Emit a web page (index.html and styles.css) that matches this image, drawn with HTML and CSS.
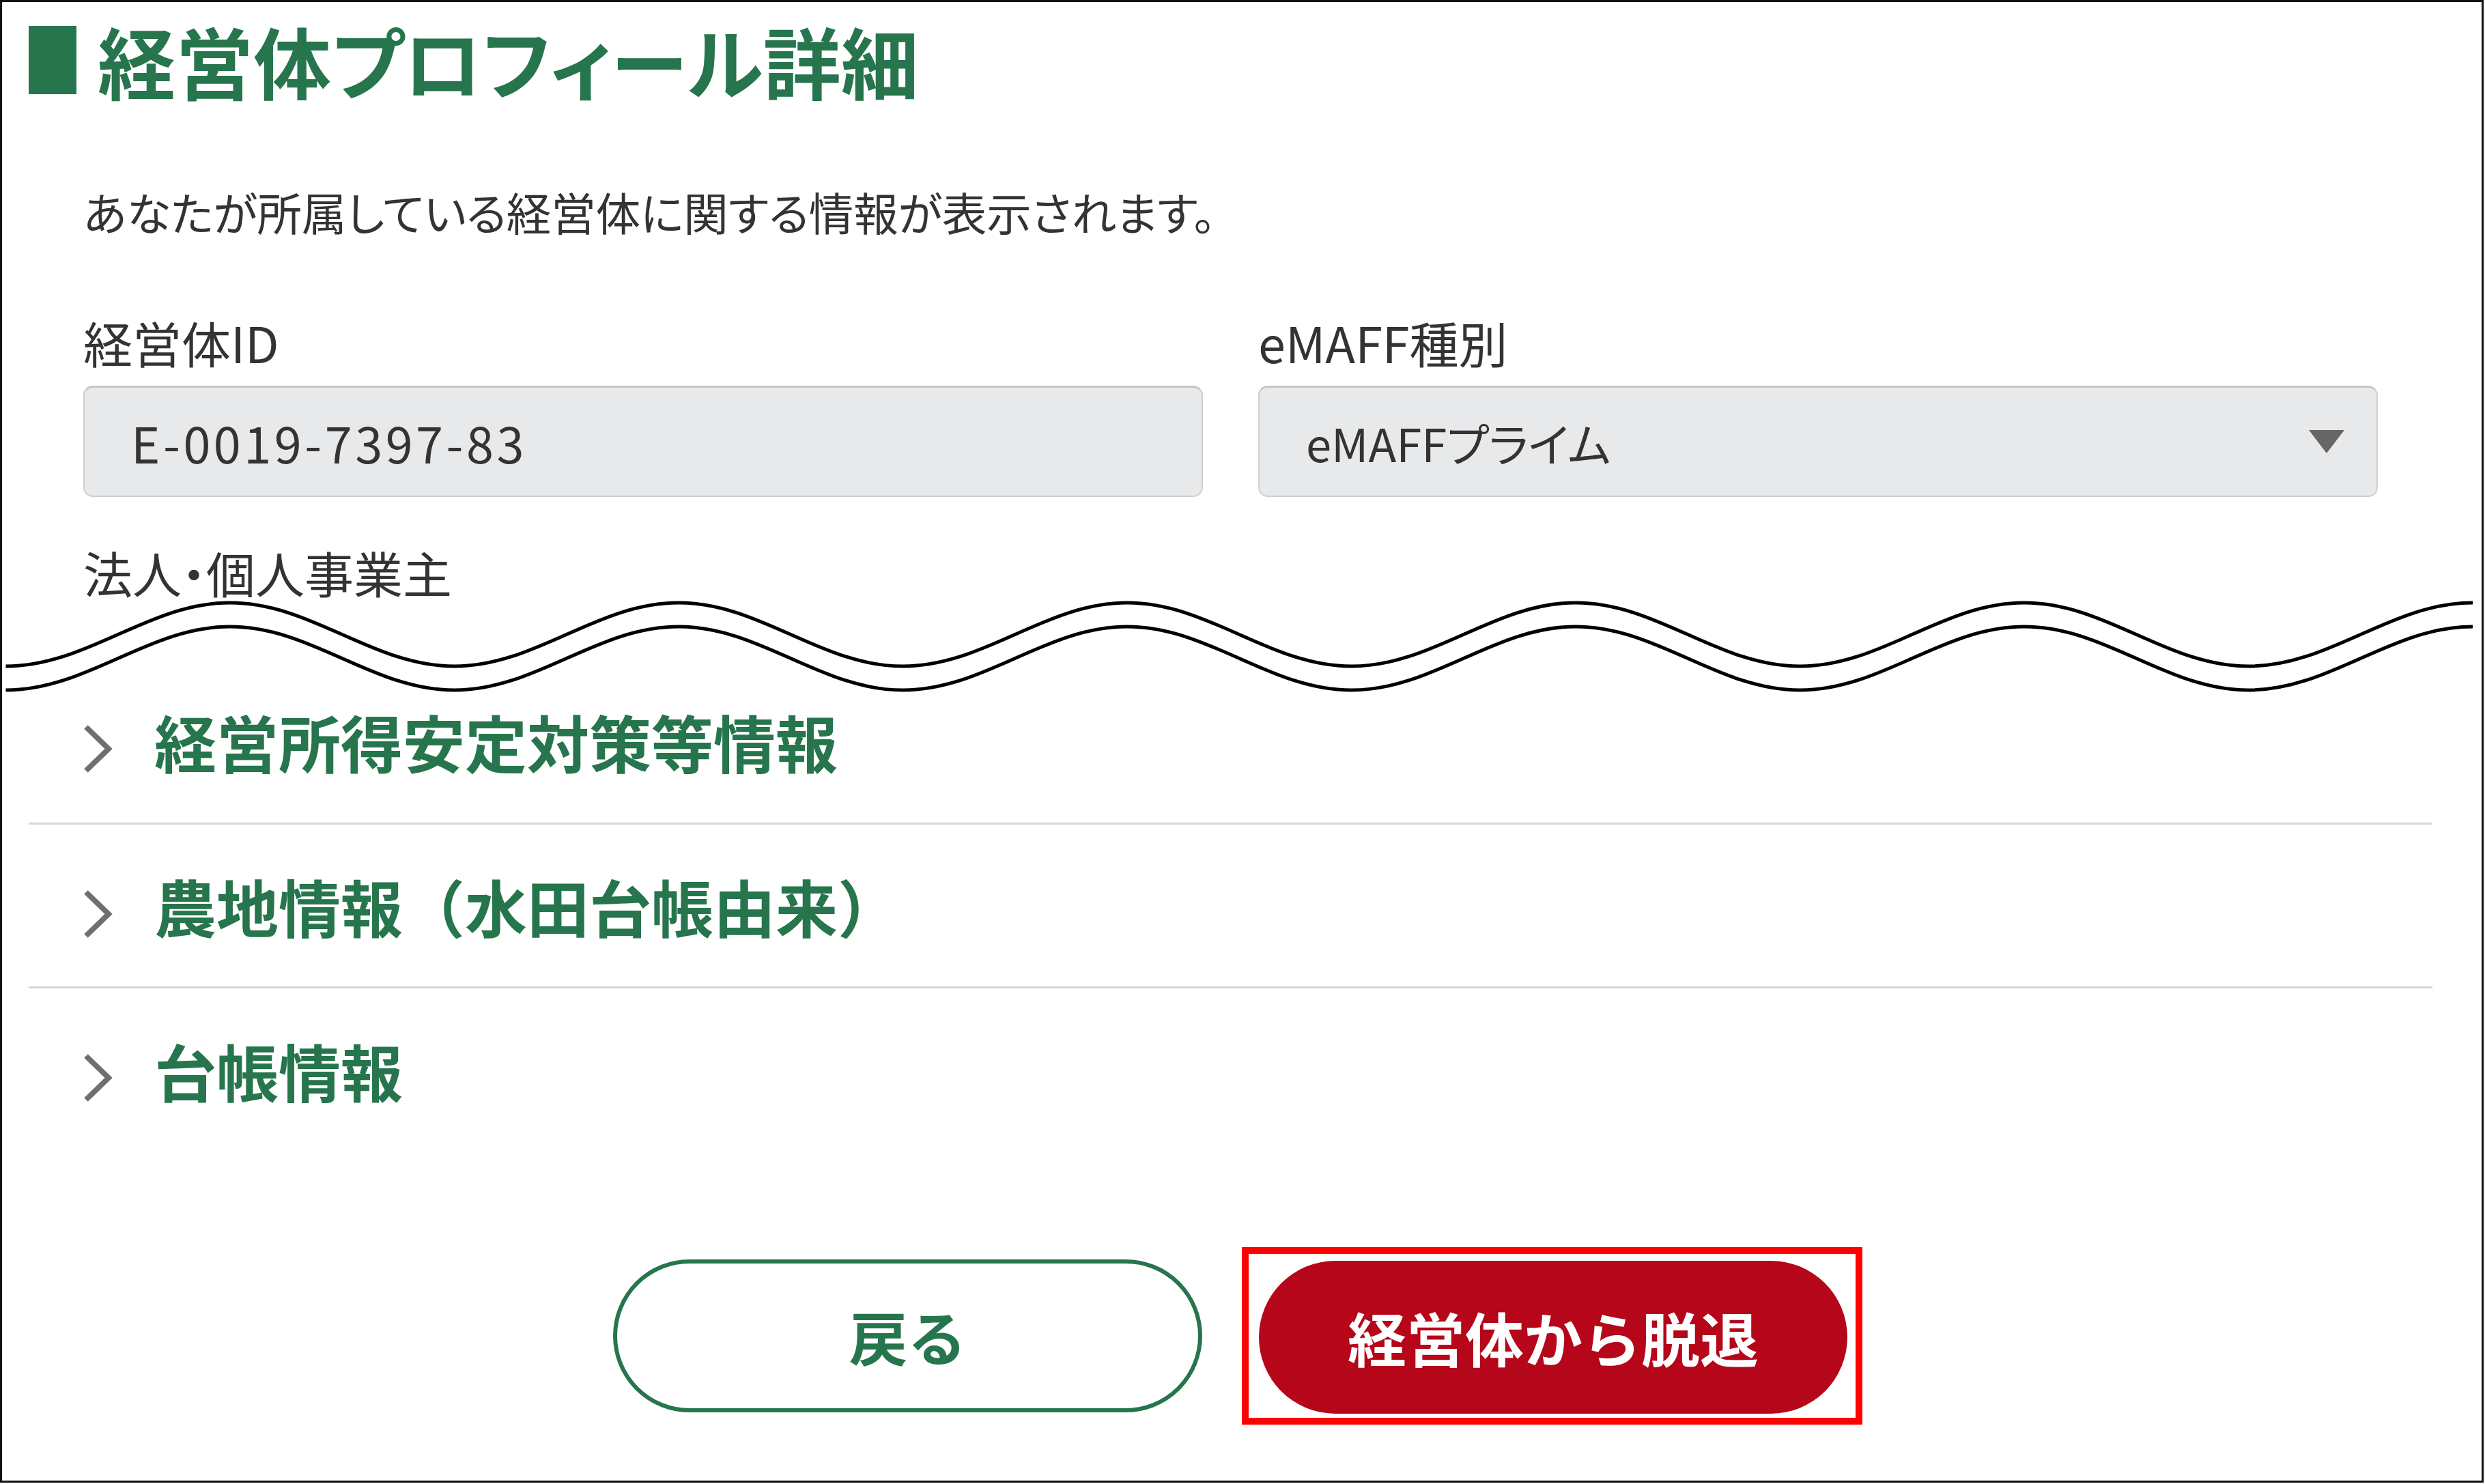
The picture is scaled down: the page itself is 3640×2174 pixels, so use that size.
FILE: index.html
```html
<!DOCTYPE html>
<html lang="ja">
<head>
<meta charset="utf-8">
<title>経営体プロフィール詳細</title>
<link rel="stylesheet" href="styles.css">
</head>
<body>
<div class="frame">
  <header class="page-head">
    <span class="head-mark"></span>
    <h1 class="head-title">経営体プロフィール詳細</h1>
  </header>

  <section class="profile">
    <p class="lead">あなたが所属している経営体に関する情報が表示されます。</p>
    <div class="fields">
      <div class="field">
        <div class="field-label">経営体ID</div>
        <div class="input-box"><span class="input-id">E-0019-7397-83</span></div>
      </div>
      <div class="field">
        <div class="field-label">eMAFF種別</div>
        <div class="input-box select-box">
          <span class="select-value">eMAFFプライム</span>
          <svg class="select-arrow" viewBox="0 0 52 34" width="52" height="34"><polygon points="0,0 52,0 26,34" fill="#666"/></svg>
        </div>
      </div>
    </div>
    <div class="field-label sub-label">法人・個人事業主</div>
  </section>

  <svg class="cut-wave" viewBox="0 0 3632 140" width="3632" height="140">
    <g fill="none" stroke="#000" stroke-width="5">
      <path d="M5.5 98 C125.5 98 214 5 334 5 S542.5 98 662.5 98 S871 5 991 5 S1199.5 98 1319.5 98 S1528 5 1648 5 S1856.5 98 1976.5 98 S2185 5 2305 5 S2513.5 98 2633.5 98 S2842 5 2962 5 S3170.5 98 3290.5 98 S3499 5 3619 5"/>
      <path transform="translate(0 35)" d="M5.5 98 C125.5 98 214 5 334 5 S542.5 98 662.5 98 S871 5 991 5 S1199.5 98 1319.5 98 S1528 5 1648 5 S1856.5 98 1976.5 98 S2185 5 2305 5 S2513.5 98 2633.5 98 S2842 5 2962 5 S3170.5 98 3290.5 98 S3499 5 3619 5"/>
    </g>
  </svg>

  <div class="accordion">
    <div class="acc-item acc-item--cut">
      <svg class="acc-chevron" viewBox="0 0 44 72" width="44" height="72"><path d="M4 4 L37 36 L4 68" fill="none" stroke="#6f6f6f" stroke-width="8"/></svg>
      <span class="acc-title">経営所得安定対策等情報</span>
    </div>
    <div class="acc-item">
      <svg class="acc-chevron" viewBox="0 0 44 72" width="44" height="72"><path d="M4 4 L37 36 L4 68" fill="none" stroke="#6f6f6f" stroke-width="8"/></svg>
      <span class="acc-title">農地情報（水田台帳由来）</span>
    </div>
    <div class="acc-item acc-item--last">
      <svg class="acc-chevron" viewBox="0 0 44 72" width="44" height="72"><path d="M4 4 L37 36 L4 68" fill="none" stroke="#6f6f6f" stroke-width="8"/></svg>
      <span class="acc-title">台帳情報</span>
    </div>
  </div>

  <div class="actions">
    <button class="btn btn-back" type="button">戻る</button>
    <div class="highlight">
      <button class="btn btn-leave" type="button">経営体から脱退</button>
    </div>
  </div>
</div>
</body>
</html>
```

FILE: styles.css
```css
html, body {
  margin: 0;
  padding: 0;
  background: #fff;
}

body {
  font-family: "Noto Sans CJK JP", "Noto Sans", sans-serif;
  color: #333;
  font-feature-settings: "palt";
}

.frame {
  width: 3638px;
  height: 2172px;
  box-sizing: border-box;
  border: 3px solid #111;
  background: #fff;
  overflow: hidden;
  padding-top: 35px;
}

/* header */
.page-head {
  display: flex;
  align-items: center;
  height: 100px;
  margin-left: 39px;
}

.head-mark {
  width: 70px;
  height: 100px;
  background: #26754d;
  flex: none;
}

.head-title {
  margin: 0 0 0 31px;
  font-size: 114px;
  line-height: 100px;
  font-weight: 700;
  color: #26754d;
  white-space: nowrap;
}

/* profile section */
.profile {
  margin: 0 72px 0 39px;
  padding: 0 80px;
}

.lead {
  margin: 122px 0 0;
  font-size: 65.5px;
  line-height: 100px;
  white-space: nowrap;
}

.fields {
  display: grid;
  grid-template-columns: 1fr 1fr;
  column-gap: 81px;
  margin-top: 101px;
}

.field-label {
  font-size: 72px;
  line-height: 80px;
  height: 80px;
  margin-bottom: 24px;
  white-space: nowrap;
}

.sub-label {
  margin: 70px 0 0;
}

.input-box {
  height: 163px;
  box-sizing: border-box;
  background: #e8e9eb;
  border: 2px solid #cfcfcf;
  border-top: 3px solid #c6c6c6;
  border-radius: 14px;
  display: flex;
  align-items: center;
  padding: 0 47px 0 68px;
}

.input-id {
  font-size: 72px;
  letter-spacing: 4.5px;
  color: #333;
  font-feature-settings: normal;
}

.select-box {
  justify-content: space-between;
}

.select-value {
  font-size: 67px;
  color: #333;
}

.select-arrow {
  display: block;
  flex: none;
}

/* wave */
.cut-wave {
  display: block;
}

/* accordion */
.accordion {
  margin: 0 72px 0 39px;
}

.acc-item {
  display: flex;
  align-items: center;
  height: 240px;
  box-sizing: border-box;
  border-bottom: 3px solid #d6d6d6;
  padding-left: 80px;
}

.acc-item--cut {
  height: 190px;
  padding-bottom: 53px;
}

.acc-item--last {
  border-bottom: none;
  height: 238px;
}

.acc-chevron {
  display: block;
  flex: none;
  margin-top: 24px;
  margin-right: 60px;
}

.acc-title {
  font-size: 91px;
  line-height: 91px;
  font-weight: 700;
  color: #26754d;
  font-feature-settings: normal;
  white-space: nowrap;
}

/* actions */
.actions {
  display: flex;
  justify-content: center;
  align-items: center;
  gap: 58px;
  margin-top: 141px;
  padding-right: 12px;
}

.btn {
  width: 862px;
  height: 224px;
  box-sizing: border-box;
  border-radius: 112px;
  font-family: "Noto Sans CJK JP", sans-serif;
  font-size: 86px;
  font-weight: 700;
  line-height: 1;
  font-feature-settings: normal;
  display: flex;
  align-items: center;
  justify-content: center;
  padding: 0;
  cursor: pointer;
}

.btn-back {
  width: 863px;
  background: #fff;
  color: #26754d;
  border: 6px solid #26754d;
}

.btn-leave {
  background: #b5061a;
  color: #fff;
  border: none;
}

.highlight {
  border: 10px solid #ff0000;
  padding: 10px 12px 6px 15px;
}
```
